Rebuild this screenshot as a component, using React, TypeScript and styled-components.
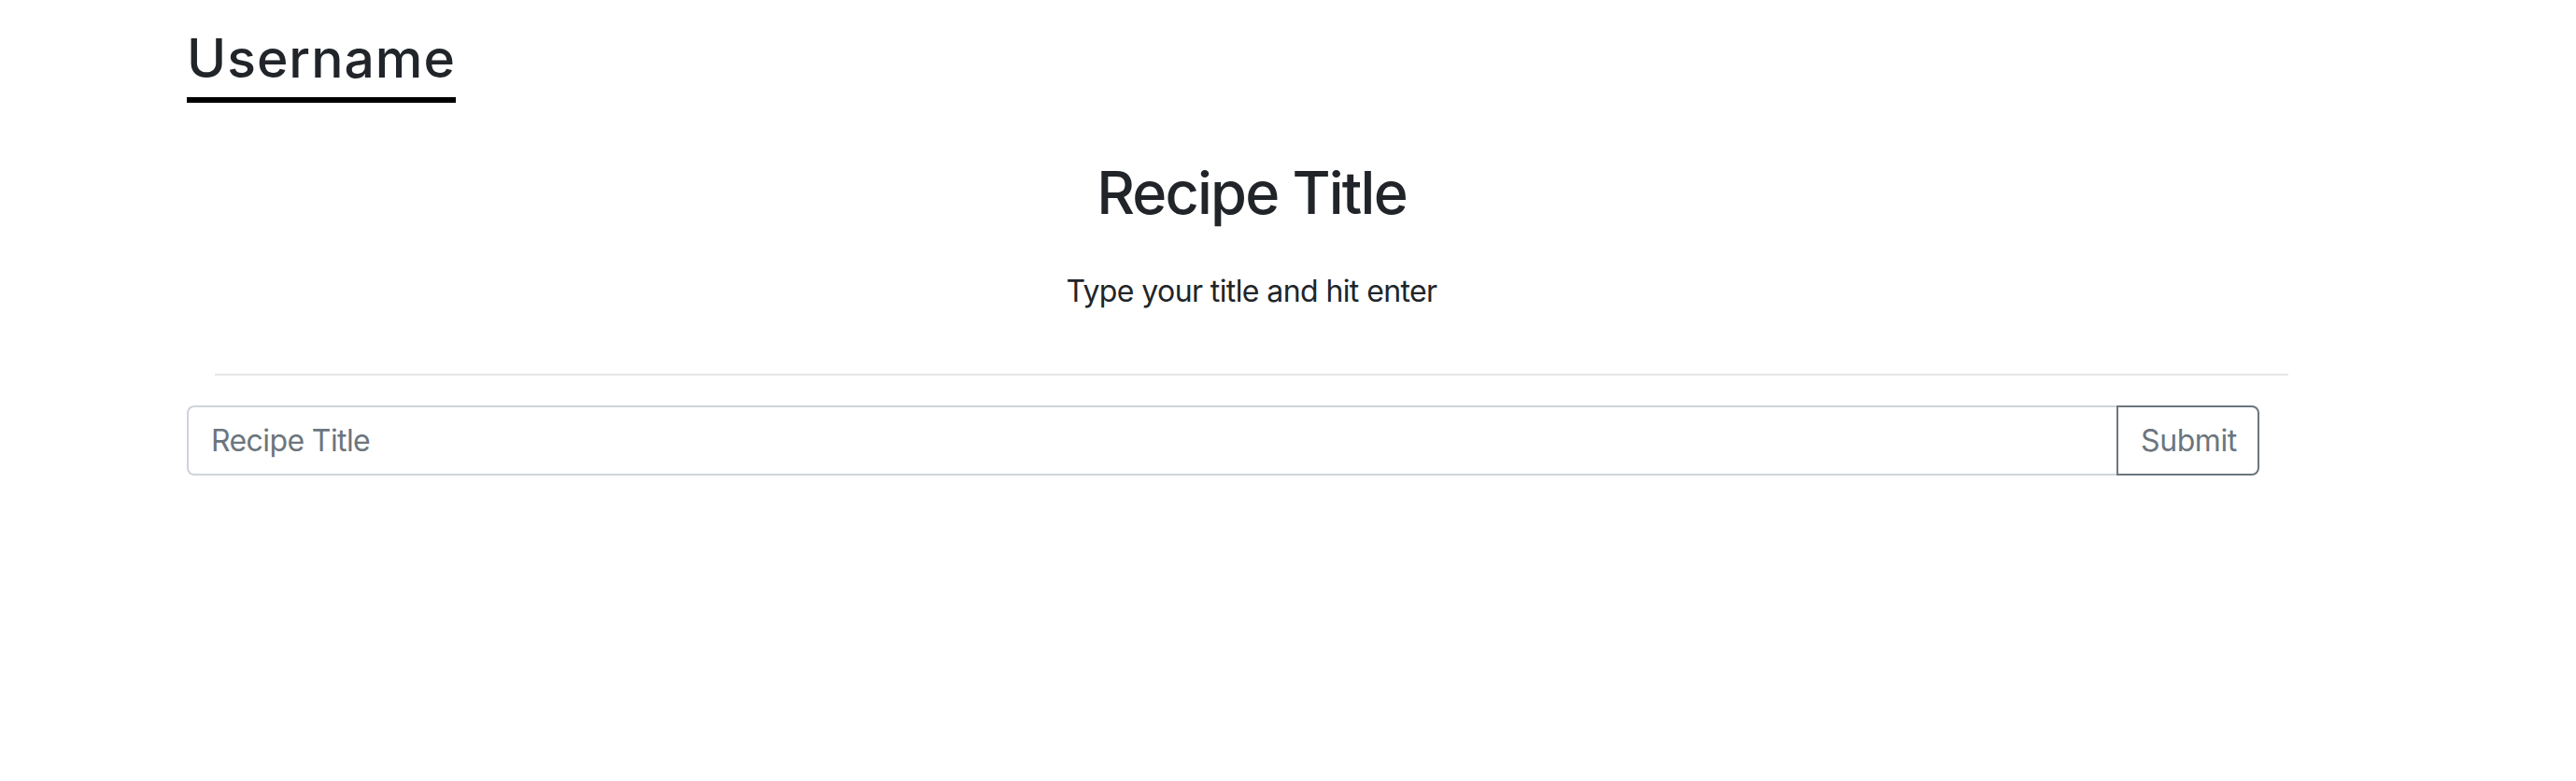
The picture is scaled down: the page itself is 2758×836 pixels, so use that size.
import styled, { createGlobalStyle } from "styled-components";

const GlobalStyle = createGlobalStyle`
  body {
    margin: 0;
    background: #fff;
    color: #212529;
    font-family: Inter, "Liberation Sans", sans-serif;
  }
`;

const Page = styled.div`
  padding: 29px 0 60px 200px;
`;

const Main = styled.main`
  width: 2280px;
`;

const Username = styled.h3`
  display: inline-block;
  margin: 0;
  font-size: 57px;
  font-weight: 500;
  line-height: 67px;
  letter-spacing: 1px;
  padding-bottom: 8px;
  border-bottom: 6px solid #000;
`;

const Header = styled.header`
  text-align: center;
  margin-top: 57px;
`;

const Title = styled.h2`
  margin: 0;
  font-size: 63px;
  font-weight: 500;
  line-height: 79px;
  letter-spacing: -1.8px;
`;

const Hint = styled.p`
  margin: 42px 0 0;
  font-size: 32px;
  line-height: 48px;
  letter-spacing: -0.6px;
`;

const Rule = styled.hr`
  margin: 64px 30px 0;
  border: 0;
  border-top: 2px solid #e5e5e5;
`;

const InputGroup = styled.form`
  display: flex;
  width: 2219px;
  margin-top: 32px;
`;

const TitleInput = styled.input`
  flex: 1;
  box-sizing: border-box;
  height: 75px;
  padding: 0 24px;
  font: inherit;
  font-size: 32px;
  line-height: 48px;
  letter-spacing: -0.6px;
  color: #212529;
  border: 2px solid #ced4da;
  border-right: 0;
  border-radius: 8px 0 0 8px;
  outline: none;
  &::placeholder {
    color: #6c757d;
  }
`;

const SubmitButton = styled.button`
  box-sizing: border-box;
  width: 153px;
  height: 75px;
  padding: 0 24px;
  font: inherit;
  font-size: 32px;
  letter-spacing: -0.4px;
  color: #6c757d;
  background: #fff;
  border: 2px solid #6c757d;
  border-radius: 0 8px 8px 0;
`;

export default function App() {
  return (
    <Page>
      <GlobalStyle />
      <Main>
        <Username>Username</Username>
        <Header>
          <Title>Recipe Title</Title>
          <Hint>Type your title and hit enter</Hint>
        </Header>
        <Rule />
        <InputGroup onSubmit={(e) => e.preventDefault()}>
          <TitleInput placeholder="Recipe Title" />
          <SubmitButton type="submit">Submit</SubmitButton>
        </InputGroup>
      </Main>
    </Page>
  );
}
